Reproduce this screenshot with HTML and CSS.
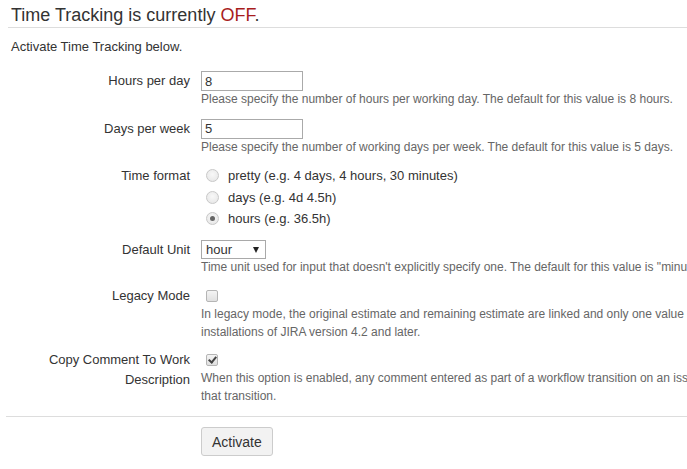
FILE: index.html
```html
<!DOCTYPE html>
<html lang="en">
<head>
<meta charset="utf-8">
<title>Time Tracking</title>
<link rel="stylesheet" href="styles.css">
</head>
<body>
<div class="page">
  <h1 class="title">Time Tracking is currently <span class="off">OFF</span>.</h1>
  <p class="intro">Activate Time Tracking below.</p>

  <form class="form">
    <div class="group">
      <label class="label" for="hpd">Hours per day</label>
      <div class="field">
        <input class="text" id="hpd" type="text" value="8">
        <div class="desc">Please specify the number of hours per working day. The default for this value is 8 hours.</div>
      </div>
    </div>

    <div class="group group-short">
      <label class="label" for="dpw">Days per week</label>
      <div class="field">
        <input class="text" id="dpw" type="text" value="5">
        <div class="desc">Please specify the number of working days per week. The default for this value is 5 days.</div>
      </div>
    </div>

    <div class="group">
      <span class="label label-radio">Time format</span>
      <div class="field">
        <label class="radio-row"><input class="radio" type="radio" name="fmt"> pretty (e.g. 4 days, 4 hours, 30 minutes)</label>
        <label class="radio-row"><input class="radio" type="radio" name="fmt"> days (e.g. 4d 4.5h)</label>
        <label class="radio-row"><input class="radio" type="radio" name="fmt" checked> hours (e.g. 36.5h)</label>
      </div>
    </div>

    <div class="group">
      <label class="label label-select" for="unit">Default Unit</label>
      <div class="field">
        <span class="select-wrap">
          <select class="select" id="unit">
            <option>minute</option>
            <option selected>hour</option>
            <option>day</option>
            <option>week</option>
          </select>
        </span>
        <div class="desc">Time unit used for input that doesn't explicitly specify one. The default for this value is "minute".</div>
      </div>
    </div>

    <div class="group group-short">
      <label class="label label-check" for="legacy">Legacy Mode</label>
      <div class="field">
        <div class="check-row"><input class="check" id="legacy" type="checkbox"></div>
        <div class="desc">In legacy mode, the original estimate and remaining estimate are linked and only one value can be set by users. This matches<br>installations of JIRA version 4.2 and later.</div>
      </div>
    </div>

    <div class="group">
      <label class="label label-check" for="copy">Copy Comment To Work Description</label>
      <div class="field">
        <div class="check-row"><input class="check" id="copy" type="checkbox" checked></div>
        <div class="desc">When this option is enabled, any comment entered as part of a workflow transition on an issue will be copied to the work log created by<br>that transition.</div>
      </div>
    </div>

    <div class="buttons">
      <button class="button" type="button">Activate</button>
    </div>
  </form>
</div>
</body>
</html>
```

FILE: styles.css
```css
html, body {
  margin: 0;
  padding: 0;
  overflow: hidden;
  background: #fff;
}

body {
  font-family: Arial, "Liberation Sans", sans-serif;
  color: #333;
}

.page {
  margin: 0 0 0 8px;
}

.title {
  margin: 0;
  padding: 3px 3px 0;
  font-size: 18px;
  font-weight: normal;
  line-height: 24px;
  color: #333;
  border-bottom: 1px solid #ddd;
  width: 700px;
}

.off {
  color: #a81d1d;
}

.intro {
  margin: 10px 0 0;
  padding-left: 3px;
  font-size: 13px;
  line-height: 18px;
}

.form {
  margin-top: 15px;
}

.group {
  display: grid;
  grid-template-columns: 182px 1fr;
  column-gap: 11px;
  margin-bottom: 10px;
}

.group-short {
  margin-bottom: 9px;
}

.label {
  font-size: 13px;
  line-height: 20px;
  text-align: right;
  color: #333;
}

.label-radio {
  line-height: 21.5px;
}

.label-select {
  line-height: 19px;
}

.field {
  min-width: 0;
  white-space: nowrap;
}

.text {
  display: block;
  box-sizing: border-box;
  width: 102px;
  height: 20px;
  margin: 0;
  padding: 0 3px;
  border: 1px solid #aaa;
  font-family: inherit;
  font-size: 13px;
  color: #333;
  background: #fff;
  outline: none;
}

.desc {
  font-size: 12px;
  line-height: 17.5px;
  color: #666;
  white-space: nowrap;
}

.radio-row {
  display: flex;
  align-items: center;
  height: 21.5px;
  font-size: 13px;
  color: #333;
}

.radio {
  appearance: none;
  -webkit-appearance: none;
  box-sizing: border-box;
  width: 13px;
  height: 13px;
  margin: 0 9px 0 5px;
  border: 1px solid #c8c8c8;
  border-radius: 50%;
  background: radial-gradient(circle at 50% 40%, #f8f8f8 0, #e4e4e4 100%);
  display: grid;
  place-items: center;
}

.radio:checked::after {
  content: "";
  width: 5px;
  height: 5px;
  border-radius: 50%;
  background: #666;
}

.select-wrap {
  position: relative;
  display: inline-block;
  vertical-align: top;
}

.select {
  appearance: none;
  -webkit-appearance: none;
  display: block;
  box-sizing: border-box;
  width: 65px;
  height: 19px;
  margin: 0;
  padding: 0 0 0 4px;
  border: 1px solid #a9a9a9;
  border-radius: 0;
  background: #fff;
  font-family: inherit;
  font-size: 13px;
  color: #333;
  outline: none;
}

.select-wrap::after {
  content: "";
  position: absolute;
  right: 7px;
  top: 7px;
  border-left: 3.5px solid transparent;
  border-right: 3.5px solid transparent;
  border-top: 6px solid #222;
  pointer-events: none;
}

.check-row {
  display: flex;
  align-items: center;
  height: 20px;
}

.check {
  appearance: none;
  -webkit-appearance: none;
  box-sizing: border-box;
  width: 12px;
  height: 12px;
  margin: 0 0 0 5px;
  border: 1px solid #b5b5b5;
  border-radius: 2px;
  background: linear-gradient(#f4f4f4, #e0e0e0);
  position: relative;
}

.check:checked::after {
  content: "";
  position: absolute;
  left: 3px;
  top: 0px;
  width: 3px;
  height: 6px;
  border-right: 2px solid #444;
  border-bottom: 2px solid #444;
  transform: rotate(40deg);
}

.buttons {
  margin-top: 11px;
  margin-left: -2px;
  padding: 10px 0 0 195px;
  border-top: 1px solid #ddd;
  width: 700px;
}

.button {
  box-sizing: border-box;
  height: 29px;
  margin: 0;
  padding: 0 10px;
  border: 1px solid #ccc;
  border-radius: 3px;
  background: #f2f2f2;
  font-family: inherit;
  font-size: 14px;
  color: #333;
  cursor: pointer;
}
```
